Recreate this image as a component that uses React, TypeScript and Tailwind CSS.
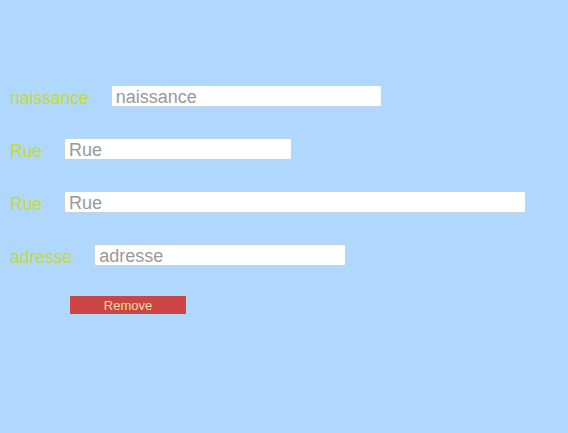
import { useState } from "react";

interface Field {
  id: string;
  label: string;
  width: string;
}

const fields: Field[] = [
  { id: "naissance", label: "naissance", width: "w-[271px]" },
  { id: "rue1", label: "Rue", width: "w-[228px]" },
  { id: "rue2", label: "Rue", width: "w-[462px]" },
  { id: "adresse", label: "adresse", width: "w-[252px]" },
];

export default function App() {
  const [values, setValues] = useState<Record<string, string>>({});

  return (
    <div
      className="min-h-[433px] w-full bg-[#b0d8ff] pt-[85px] pl-[10px]"
      style={{ fontFamily: '"Liberation Sans", Arial, sans-serif' }}
    >
      <div className="flex flex-col gap-[31px]">
        {fields.map((f) => (
          <div key={f.id} className="flex h-[22px] items-center gap-[22px]">
            <label
              htmlFor={f.id}
              className="mt-[3px] text-[17.5px] leading-[22px] text-[#c5da2e]"
            >
              {f.label}
            </label>
            <input
              id={f.id}
              placeholder={f.label}
              value={values[f.id] ?? ""}
              onChange={(e) => setValues({ ...values, [f.id]: e.target.value })}
              className={`${f.width} h-[22px] rounded-[2px] border border-[#c3d2e2] bg-white px-[4px] pt-[3px] text-[18px] leading-[18px] text-[#333] outline-none placeholder:text-[#999]`}
            />
          </div>
        ))}
      </div>

      {/* Remove button */}
      <button
        type="button"
        className="mt-[30px] ml-[60px] flex h-[18px] w-[116px] items-center justify-center bg-[#cc4444] text-[13px] leading-none text-[#e6e2a2]"
      >
        Remove
      </button>
    </div>
  );
}
